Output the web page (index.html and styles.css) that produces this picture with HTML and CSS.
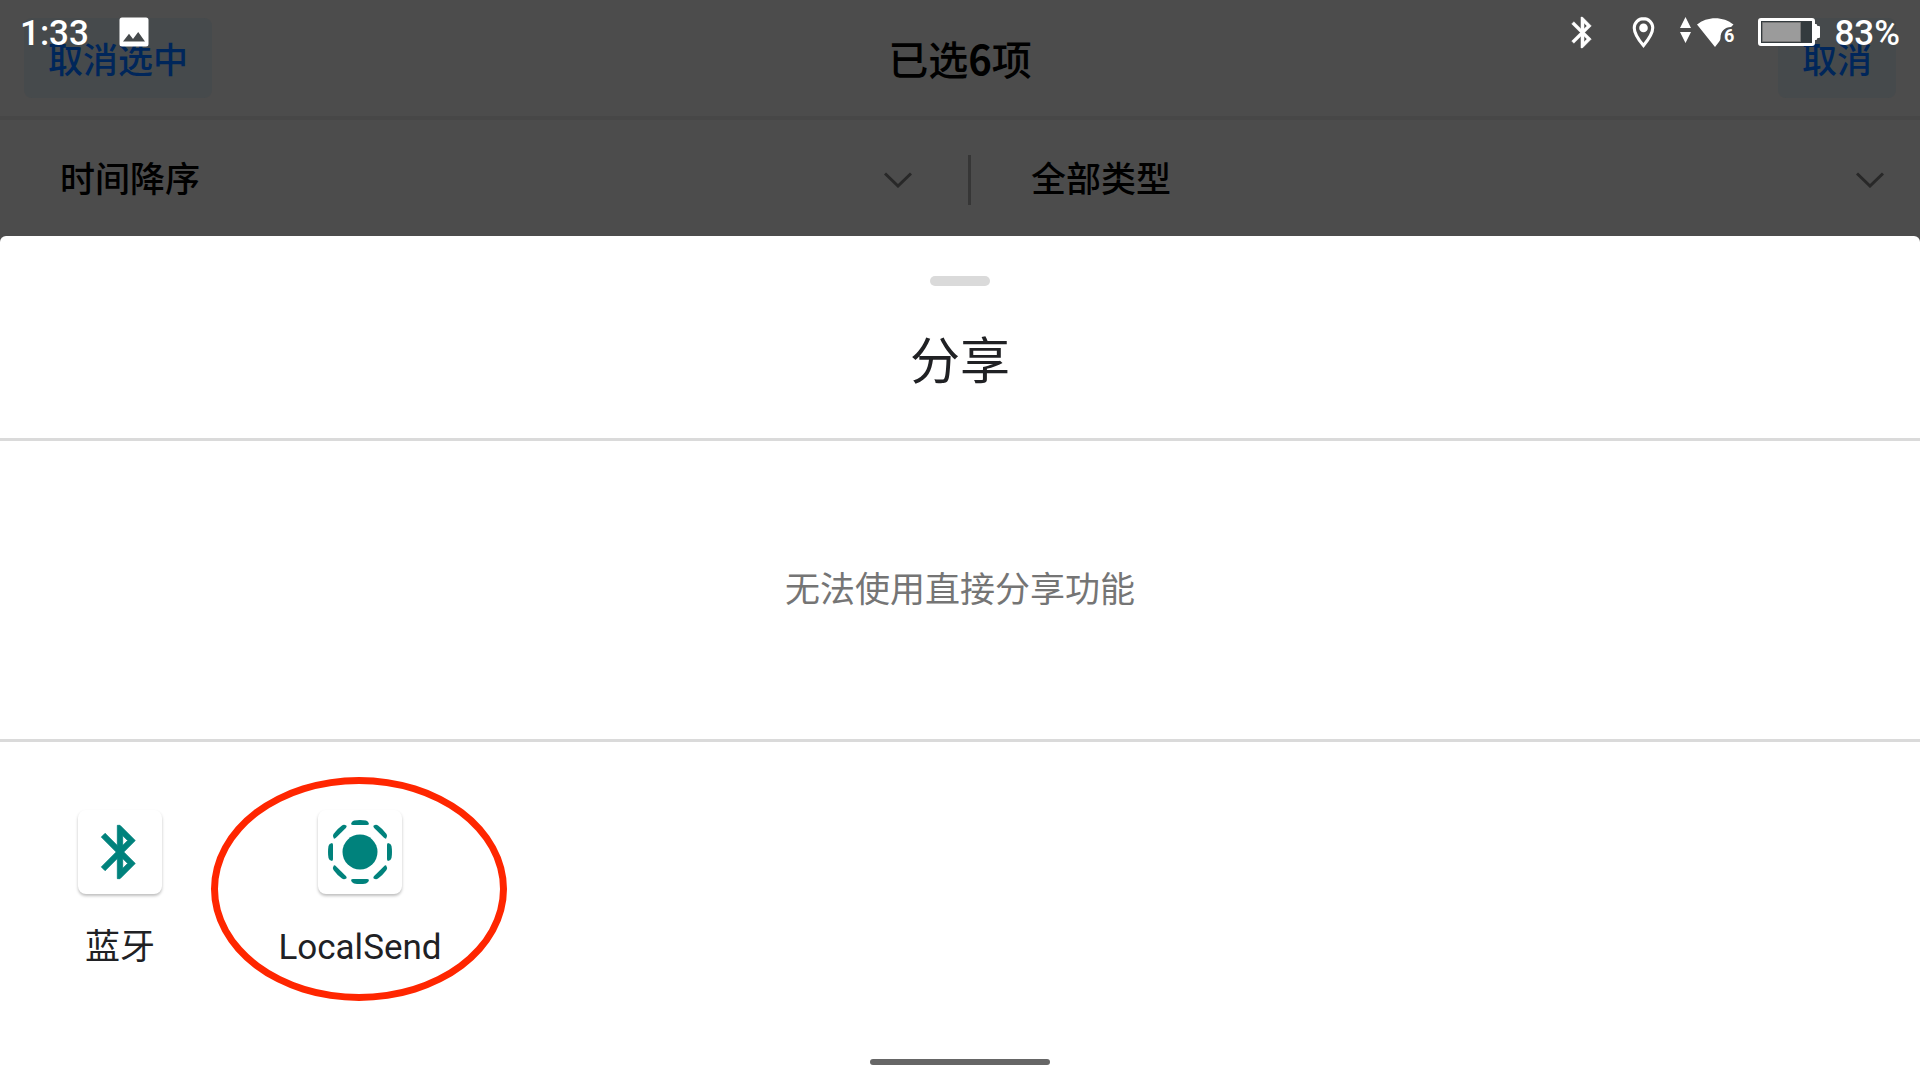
FILE: index.html
```html
<!DOCTYPE html>
<html lang="zh-CN">
<head>
<meta charset="utf-8">
<meta name="viewport" content="width=device-width, initial-scale=1">
<title>分享</title>
<link rel="stylesheet" href="styles.css">
</head>
<body>
<div class="status-bar">
  <div class="status-group">
    <span>1:33</span>
    <svg class="icon-picture" viewBox="0 0 30 30" aria-hidden="true"><path fill="#fff" fill-rule="evenodd" d="M3 0.500h24a2.500 2.500 0 0 1 2.500 2.500v24a2.500 2.500 0 0 1-2.500 2.500H3A2.500 2.500 0 0 1 .5 27V3A2.500 2.500 0 0 1 3 .5zM4 24.500h22l-6.800-9.500-5.200 7-4-5.200z"/></svg>
  </div>
  <div class="status-group">
    <svg class="icon-bluetooth" viewBox="0 0 24 24" aria-hidden="true"><path fill="#fff" stroke="#fff" stroke-width=".3" d="M17.710 7.710L12 2h-1v7.590L6.410 5 5 6.410 10.590 12 5 17.590 6.410 19 11 14.410V22h1l5.710-5.710-4.300-4.290 4.300-4.290zM13 5.830l1.880 1.880L13 9.590V5.830zm1.880 10.460L13 18.170v-3.760l1.880 1.880z"/></svg>
    <svg class="icon-location" viewBox="0 0 24 24" aria-hidden="true"><path fill="none" stroke="#fff" stroke-width="2" d="M12 3C8.700 3 6 5.700 6 9c0 4.300 6 11.500 6 11.500S18 13.300 18 9c0-3.300-2.700-6-6-6z"/><circle cx="12" cy="9" r="2.800" fill="#fff"/></svg>
    <div class="wifi">
      <svg class="icon-wifi" viewBox="0 0 56 32" aria-hidden="true"><path fill="#fff" d="M2 12L7.500 1 13 12zM2 16h11L7.500 27z"/><path fill="#fff" d="M19 8.500C29 0 45.500 0 55.500 8.500L53 11c-6 0-10.500 4-10.500 11 0 2-1 3-2 4.500L37 31z"/></svg>
      <span class="wifi-generation">6</span>
    </div>
    <svg class="icon-battery" viewBox="0 0 62 28" aria-hidden="true"><rect x="1.500" y="1.500" width="54" height="25" rx="1.500" fill="#343b3e" stroke="#fff" stroke-width="3"/><path fill="#9b9b9b" stroke="#777" d="M4.500 4.500h38v19h-38z"/><path fill="#fff" d="M56 6h2.500l1 2H61a1 1 0 0 1 1 1v10a1 1 0 0 1-1 1h-1.500l-1 2H56z"/></svg>
    <span>83%</span>
  </div>
</div>

<header class="toolbar">
  <button class="toolbar-button deselect" type="button">取消选中</button>
  <h1 class="toolbar-title">已选<b>6</b>项</h1>
  <button class="toolbar-button cancel" type="button">取消</button>
</header>

<div class="filters">
  <div class="filter filter-order">
    <select class="filter-select" aria-label="排序"><option>时间降序</option></select>
    <svg class="chevron" viewBox="0 0 28 16" aria-hidden="true"><path d="M1 1.500l13 12.500 13-12.500"/></svg>
  </div>
  <div class="filter-divider"></div>
  <div class="filter">
    <select class="filter-select" aria-label="类型"><option>全部类型</option></select>
    <svg class="chevron" viewBox="0 0 28 16" aria-hidden="true"><path d="M1 1.500l13 12.500 13-12.500"/></svg>
  </div>
</div>

<main class="sheet">
  <div class="sheet-header">
    <div class="handle"></div>
    <h2 class="sheet-title">分享</h2>
  </div>
  <p class="direct-share">无法使用直接分享功能</p>
  <div class="apps">
    <button class="app" type="button">
      <span class="app-tile">
        <svg class="app-icon" viewBox="0 0 24 24" aria-hidden="true"><path stroke="#00827c" stroke-width=".3" d="M17.710 7.710L12 2h-1v7.590L6.410 5 5 6.410 10.590 12 5 17.590 6.410 19 11 14.410V22h1l5.710-5.710-4.300-4.290 4.300-4.290zM13 5.830l1.880 1.880L13 9.590V5.830zm1.880 10.460L13 18.170v-3.760l1.880 1.880z"/></svg>
      </span>
      <span>蓝牙</span>
    </button>
    <button class="app" type="button">
      <span class="app-tile">
        <svg class="app-icon" viewBox="-32 -32 64 64" aria-hidden="true">
          <circle r="17.500"/>
          <g id="pair"><path id="dash" d="M-9-28Q-8.500-31-6-31.500Q0-32.500 6-31.500Q8.500-31 9-28Q8.500-27 7-27H-7Q-8.500-27-9-28z"/><use href="#dash" transform="rotate(45)"/></g>
          <use href="#pair" transform="rotate(90)"/>
          <use href="#pair" transform="rotate(180)"/>
          <use href="#pair" transform="rotate(270)"/>
        </svg>
      </span>
      <span>LocalSend</span>
      <span class="highlight"></span>
    </button>
  </div>
  <div class="home-bar"></div>
</main>
</body>
</html>
```
FILE: styles.css
```css
* {
  box-sizing: border-box;
}

body {
  margin: 0;
  min-height: 100vh;
  display: flex;
  flex-direction: column;
  background: #4c4c4c;
  color: #202124;
  font-family: Roboto, "Noto Sans CJK SC", sans-serif;
  font-size: 35px;
  line-height: 48px;
}

button,
select {
  margin: 0;
  padding: 0;
  border: 0;
  background: none;
  color: inherit;
  font: inherit;
}

svg {
  display: block;
  flex: none;
}

/* System status bar, drawn over the dimmed toolbar */
.status-bar {
  position: absolute;
  top: 0;
  left: 0;
  right: 0;
  z-index: 1;
  display: flex;
  justify-content: space-between;
  height: 64px;
  padding: 0 20px;
  color: #fff;
  font-weight: 500;
  pointer-events: none;
}

.status-group {
  display: flex;
  align-items: center;
}

.status-group > span {
  padding-top: 4px;
}

.icon-picture {
  width: 30px;
  height: 30px;
  margin-left: 30px;
}

.icon-bluetooth {
  width: 37px;
  height: 37px;
}

.icon-location {
  width: 37px;
  height: 37px;
  margin: 0 16px 0 24px;
}

.wifi {
  position: relative;
  margin-right: 24px;
}

.icon-wifi {
  width: 56px;
  height: 32px;
}

.wifi-generation {
  position: absolute;
  right: 0;
  bottom: 0;
  font-size: 18px;
  font-weight: 700;
  line-height: 24px;
}

.icon-battery {
  width: 62px;
  height: 28px;
  margin-right: 14px;
}

/* Dimmed gallery behind the sheet */
.toolbar {
  display: grid;
  grid-template-columns: 1fr auto 1fr;
  align-items: center;
  height: 120px;
  padding: 0 24px;
  border-bottom: 4px solid #474747;
  color: #000;
}

.toolbar-button {
  height: 80px;
  padding: 8px 24px 0;
  border-radius: 8px;
  background: #464a4c;
  color: #00265a;
  font-weight: 500;
}

.deselect {
  justify-self: start;
}

.cancel {
  justify-self: end;
}

.toolbar-title {
  margin: 0;
  font-family: "Noto Sans CJK SC", sans-serif;
  font-size: 40px;
  font-weight: 500;
}

.filters {
  display: grid;
  grid-template-columns: calc(50% + 8px) 3px 1fr;
  align-items: center;
  height: 116px;
  padding-top: 4px;
  color: #000;
  font-weight: 500;
}

.filter {
  display: grid;
  align-items: center;
  padding: 0 36px 0 60px;
}

.filter-order {
  padding-right: 56px;
}

.filter-select {
  grid-area: 1 / 1;
  width: 100%;
  height: 56px;
  padding-top: 2px;
  appearance: none;
}

.chevron {
  grid-area: 1 / 1;
  justify-self: end;
  width: 28px;
  height: 16px;
  fill: none;
  stroke: #282828;
  stroke-width: 3;
  pointer-events: none;
}

.filter-divider {
  height: 50px;
  background: #363636;
}

/* Share sheet */
.sheet {
  flex: 1;
  display: flex;
  flex-direction: column;
  border-radius: 6px 6px 0 0;
  background: #fff;
}

.sheet-header {
  display: flex;
  flex-direction: column;
  align-items: center;
  padding: 40px 0 38px;
  border-bottom: 3px solid #dadada;
}

.handle {
  width: 60px;
  height: 10px;
  border-radius: 5px;
  background: #dadada;
}

.sheet-title {
  margin: 38px 0 0;
  font-size: 50px;
  font-weight: 400;
  line-height: 76px;
}

.direct-share {
  margin: 0;
  padding: 126px 24px 124px;
  border-bottom: 3px solid #dadada;
  color: #757575;
  text-align: center;
}

.apps {
  display: grid;
  grid-template-columns: repeat(8, 1fr);
  padding-top: 68px;
}

.app {
  position: relative;
  display: flex;
  flex-direction: column;
  align-items: center;
  gap: 30px;
}

.app-tile {
  display: grid;
  place-items: center;
  width: 84px;
  height: 84px;
  border-radius: 8px;
  background: #fff;
  box-shadow: 0 2px 3px rgba(0, 0, 0, 0.25);
  fill: #00827c;
}

.app-icon {
  width: 64px;
  height: 64px;
}

.highlight {
  position: absolute;
  top: -33px;
  left: 50%;
  width: 296px;
  height: 224px;
  margin-left: -149px;
  border: 7px solid #ff2600;
  border-radius: 50%;
  pointer-events: none;
}

.home-bar {
  align-self: center;
  width: 180px;
  height: 6px;
  margin: auto 0 15px;
  border-radius: 3px;
  background: #666;
}
```
